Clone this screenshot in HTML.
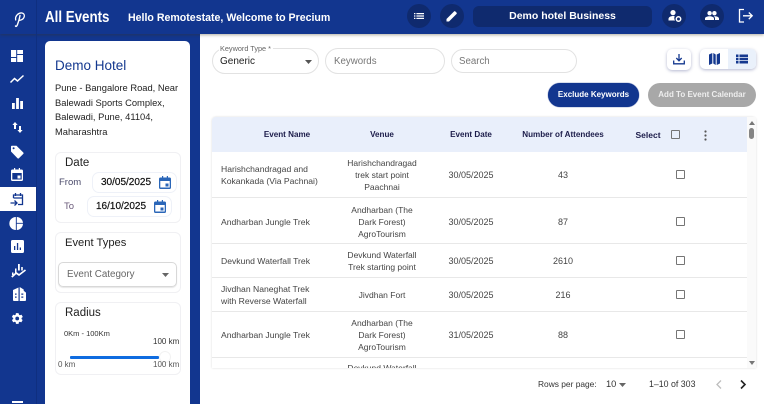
<!DOCTYPE html>
<html><head><meta charset="utf-8">
<style>
*{box-sizing:border-box}
html,body{margin:0;padding:0}
body{width:764px;height:404px;position:relative;overflow:hidden;background:#fff;font-family:"Liberation Sans",sans-serif;color:#222}
.a{position:absolute}
.t{position:absolute;white-space:nowrap;line-height:1}
.c{position:absolute;text-align:center;font-size:8.5px;line-height:12px;color:#444;transform:translateX(-50%);white-space:nowrap}
.d{font-size:9px}
.h{font-size:8.1px;font-weight:700;color:#1c1c4a}
.l{position:absolute;font-size:8.6px;line-height:12px;color:#444;white-space:nowrap}
.rl{position:absolute;left:212px;width:535px;height:1px;background:#e8e8e8}
.cb{position:absolute;width:9px;height:9px;border:1.3px solid #757575;border-radius:1px}
.hc{position:absolute;width:24px;height:24px;border-radius:50%;background:#0f2a6e}
svg{position:absolute;overflow:visible}
.pill{position:absolute;border:1px solid #e2e2e2;border-radius:13px;background:#fff}
.box{position:absolute;border:1px solid #f0f0f3;border-radius:6px;background:#fff}
.date{position:absolute;border:1px solid #eef1f8;border-radius:7px;background:#fff}
</style></head><body>
<!-- backgrounds -->
<div class="a" style="left:0;top:0;width:200px;height:404px;background:#12368f"></div>
<div class="a" style="left:0;top:0;width:764px;height:34px;background:#12368f;box-shadow:0 1px 3px rgba(60,50,20,.4)"></div>
<div class="a" style="left:36px;top:0;width:1px;height:404px;background:#0f2f80"></div>
<div class="a" style="left:45px;top:41px;width:145px;height:363px;background:#fff;border-radius:5px 5px 0 0"></div>
<div class="a" style="left:0;top:187px;width:36px;height:24px;background:#fff"></div>

<!-- logo -->
<svg style="left:12px;top:10px" width="16" height="18" viewBox="0 0 16 18"><path d="M3.700 10C2.800 5.500 7 2.500 10 3C13.500 3.600 13.300 9 8 10.300" fill="none" stroke="#fff" stroke-width="1.300" stroke-linecap="round"/><path d="M8 5.500C7.500 9 6.500 12 5.500 14.500C5 16 4 17 3.500 16" fill="none" stroke="#fff" stroke-width="1.400" stroke-linecap="round"/></svg>

<!-- header text -->
<div class="t" style="left:45px;top:10px;font-size:15.500px;font-weight:700;color:#fff;transform:scaleX(.86);transform-origin:0 0">All Events</div>
<div class="t" style="left:128px;top:13px;font-size:10.600px;font-weight:700;color:#fff">Hello Remotestate, Welcome to Precium</div>

<!-- header buttons -->
<div class="hc" style="left:407px;top:4px"></div>
<svg style="left:413px;top:10px" width="12" height="12" viewBox="0 0 12 12"><path d="M1 3h1.400v1.200H1zM1 5.400h1.400v1.200H1zM1 7.800h1.400V9H1zM3.400 3H11v1.200H3.400zM3.400 5.400H11v1.200H3.400zM3.400 7.800H11V9H3.400z" fill="#fff"/></svg>
<div class="hc" style="left:440px;top:4px"></div>
<svg style="left:446px;top:10px" width="12" height="12" viewBox="0 0 12 12"><path d="M.5 11.500V9L8 1.500a1 1 0 0 1 1.400 0l1.100 1.100a1 1 0 0 1 0 1.400L3 11.500z" fill="#fff"/></svg>
<div class="a" style="left:473px;top:6px;width:179px;height:21px;border-radius:6px;background:#0f2a6e"></div>
<div class="t" style="left:473px;width:179px;top:11px;text-align:center;font-size:10.500px;font-weight:700;color:#fff">Demo hotel Business</div>
<div class="hc" style="left:662px;top:4px"></div>
<svg style="left:668px;top:9px" width="14" height="14" viewBox="0 0 14 14"><circle cx="5" cy="3.600" r="2.600" fill="#fff"/><path d="M.5 11.500V10c0-2 2.500-3 4.500-3 .6 0 1.200.1 1.700.2C6 8.500 6.200 10.200 7 11.500z" fill="#fff"/><circle cx="10.500" cy="10" r="2.200" fill="none" stroke="#fff" stroke-width="1.500"/></svg>
<div class="hc" style="left:700px;top:4px"></div>
<svg style="left:705px;top:10px" width="14" height="12" viewBox="0 0 14 12"><circle cx="4.600" cy="3.200" r="2.200" fill="#fff"/><circle cx="9.400" cy="3.200" r="2.200" fill="#fff"/><path d="M0 10V8.500C0 7 2.500 6.200 4.600 6.200S9 7 9 8.500V10zM10 10V8.500c0-.9-.5-1.600-1.200-2.200 2-.2 5.200.5 5.200 2.200V10z" fill="#fff"/></svg>
<svg style="left:738px;top:8px" width="16" height="16" viewBox="0 0 16 16"><path d="M6 1.500H1.500v12.500H6" fill="none" stroke="#fff" stroke-width="1.300"/><path d="M5 7.800h9M10.800 4.500l3.400 3.300-3.400 3.300" fill="none" stroke="#fff" stroke-width="1.300"/></svg>

<!-- sidebar icons -->
<svg style="left:11px;top:50px" width="12" height="12" viewBox="0 0 12 12"><path d="M0 0h5.200v7H0zM6.200 0H12v4H6.200zM6.200 5H12v7H6.200zM0 8h5.200v4H0z" fill="#fff"/></svg>
<svg style="left:10px;top:74px" width="14" height="11" viewBox="0 0 14 11"><path d="M.5 8.500 4.500 4.500 7.500 7 13.500 1.500" fill="none" stroke="#fff" stroke-width="1.500"/></svg>
<svg style="left:12px;top:98px" width="11" height="11" viewBox="0 0 11 11"><path d="M0 5h2.800v6H0zM4.100 0h2.800v11H4.100zM8.200 3H11v8H8.200z" fill="#fff"/></svg>
<svg style="left:12px;top:122px" width="11" height="11" viewBox="0 0 11 11"><path d="M3 0 5.600 3H4v4H2V3H.4zM8 11 5.400 8H7V4h2v4h1.600z" fill="#fff"/></svg>
<svg style="left:10px;top:145px" width="14" height="14" viewBox="0 0 14 14"><path d="M1 1.500A.8.8 0 0 1 1.800.7H6.500L13.300 7.500a1 1 0 0 1 0 1.400L8.900 13.300a1 1 0 0 1-1.400 0L1 6.500z" fill="#fff"/><circle cx="3.600" cy="3.300" r="1" fill="#12368f"/></svg>
<svg style="left:11px;top:168px" width="12" height="13" viewBox="0 0 12 13"><path fill-rule="evenodd" d="M1.500 1.500h1.500V0h1.200v1.500h3.600V0H9v1.500h1.500A1.500 1.500 0 0 1 12 3v8.500a1.500 1.500 0 0 1-1.500 1.500h-9A1.500 1.500 0 0 1 0 11.500V3a1.500 1.500 0 0 1 1.500-1.500zM1.300 5v6.500h9.400V5zM6.500 7.500h3v3h-3z" fill="#fff"/></svg>
<svg style="left:10px;top:192px" width="15" height="15" viewBox="0 0 15 15"><path d="M3.500 6V3h9v9.500H8M3.500 6h9M5.500 1v3M10.500 1v3" fill="none" stroke="#12368f" stroke-width="1.300"/><path d="M.5 11h6M4.500 8.500 7 11l-2.500 2.500" fill="none" stroke="#12368f" stroke-width="1.300"/></svg>
<svg style="left:10px;top:217px" width="13" height="13" viewBox="0 0 14 14"><path d="M6.300 0v14a7 7 0 0 1 0-14zM7.300 0a7 7 0 0 1 6.700 6.300H7.300zM7.300 7.300H14A7 7 0 0 1 7.300 14z" fill="#fff"/></svg>
<svg style="left:11px;top:240px" width="13" height="13" viewBox="0 0 13 13"><path fill-rule="evenodd" d="M1.500 0h10A1.500 1.500 0 0 1 13 1.500v10a1.500 1.500 0 0 1-1.500 1.500h-10A1.500 1.500 0 0 1 0 11.500v-10A1.500 1.500 0 0 1 1.500 0zM3 6v4h1.300V6zM5.900 3v7h1.300V3zM8.700 7.500V10H10V7.500z" fill="#fff"/></svg>
<svg style="left:11px;top:264px" width="15" height="14" viewBox="0 0 15 14"><path d="M1 8.500h1.500V11H1zM4 4.500h1.500v4.500H4zM7 0h1.800v6.500H7zM10.200 3h1.600v3.500h-1.600z" fill="#fff"/><path d="M.8 13 5.200 9 8 11 14.500 6" fill="none" stroke="#fff" stroke-width="1.700"/></svg>
<svg style="left:13px;top:287px" width="13" height="14" viewBox="0 0 13 14"><path fill-rule="evenodd" d="M0 3 5.500.5V14H1.300A1.300 1.300 0 0 1 0 12.700zM2 6.500v1.200h1.600V6.500zM2 9.500v1.200h1.600V9.500z" fill="#fff"/><path fill-rule="evenodd" d="M6.700 0l4 2.500v1.300l1.500 1.200a1 1 0 0 1 .8 1V12.700A1.300 1.300 0 0 1 11.700 14h-5zM8.300 6.500v1.200h2V6.500zM8.300 9.500v1.200h2V9.500z" fill="#fff"/></svg>
<svg style="left:11px;top:312px" width="13" height="13" viewBox="0 0 24 24"><path d="M19.400 13c0-.3.100-.6.100-1s0-.7-.1-1l2.100-1.600c.2-.2.200-.4.100-.6l-2-3.500c-.1-.2-.4-.3-.6-.2l-2.500 1c-.5-.4-1.100-.7-1.700-1L14 2.400c0-.2-.2-.4-.5-.4h-4c-.2 0-.4.200-.5.400l-.4 2.700c-.6.200-1.100.6-1.700 1l-2.500-1c-.2-.1-.5 0-.6.200l-2 3.500c-.1.200 0 .4.100.6L4.100 11c0 .3-.1.700-.1 1s0 .7.100 1L2 14.600c-.2.200-.2.400-.1.600l2 3.500c.1.200.4.300.6.200l2.500-1c.5.400 1.100.7 1.700 1l.4 2.700c0 .2.200.4.500.4h4c.2 0 .5-.2.500-.4l.4-2.700c.6-.2 1.100-.6 1.700-1l2.500 1c.2.100.5 0 .6-.2l2-3.500c.1-.2 0-.4-.1-.6zM11.500 15.500a3.500 3.500 0 1 1 0-7 3.500 3.500 0 0 1 0 7z" fill="#fff"/></svg>
<div class="a" style="left:12px;top:401px;width:11px;height:2px;background:#fff"></div>

<!-- hotel card -->
<div class="t" style="left:55px;top:59px;font-size:13.500px;color:#14388f">Demo Hotel</div>
<div class="a" style="left:55px;top:81px;font-size:9.350px;line-height:14.500px;color:#222;white-space:nowrap">Pune - Bangalore Road, Near<br>Balewadi Sports Complex,<br>Balewadi, Pune, 41104,<br>Maharashtra</div>

<div class="box" style="left:55px;top:152px;width:126px;height:71px"></div>
<div class="t" style="left:65px;top:158px;font-size:11.500px;color:#222">Date</div>
<div class="t" style="left:59px;top:178px;font-size:9.500px;color:#4a4a6a">From</div>
<div class="date" style="left:92px;top:172px;width:85px;height:21px"></div>
<div class="t" style="left:101px;top:178px;font-size:10px;color:#111;-webkit-text-stroke:.2px #111">30/05/2025</div>
<svg style="left:159px;top:176px" width="12" height="13" viewBox="0 0 12 13"><path fill-rule="evenodd" d="M1.500 1.500h1.500V0h1.200v1.500h3.600V0H9v1.500h1.500A1.500 1.500 0 0 1 12 3v8.500a1.500 1.500 0 0 1-1.500 1.500h-9A1.500 1.500 0 0 1 0 11.500V3a1.500 1.500 0 0 1 1.500-1.500zM1.300 5v6.500h9.400V5zM6.500 7.500h3v3h-3z" fill="#2a66b8"/></svg>
<div class="t" style="left:64px;top:202px;font-size:9.500px;color:#6a5a7a">To</div>
<div class="date" style="left:87px;top:196px;width:85px;height:21px"></div>
<div class="t" style="left:96px;top:202px;font-size:10px;color:#111;-webkit-text-stroke:.2px #111">16/10/2025</div>
<svg style="left:154px;top:200px" width="12" height="13" viewBox="0 0 12 13"><path fill-rule="evenodd" d="M1.500 1.500h1.500V0h1.200v1.500h3.600V0H9v1.500h1.500A1.500 1.500 0 0 1 12 3v8.500a1.500 1.500 0 0 1-1.500 1.500h-9A1.500 1.500 0 0 1 0 11.500V3a1.500 1.500 0 0 1 1.500-1.500zM1.300 5v6.500h9.400V5zM6.500 7.500h3v3h-3z" fill="#2a66b8"/></svg>

<div class="box" style="left:55px;top:232px;width:126px;height:61px"></div>
<div class="t" style="left:65px;top:238px;font-size:11.200px;color:#222">Event Types</div>
<div class="a" style="left:58px;top:262px;width:119px;height:25px;border:1px solid #d8d8d8;border-radius:5px;box-shadow:0 1px 1px rgba(0,0,0,.1)"></div>
<div class="t" style="left:67px;top:270px;font-size:9.800px;color:#666">Event Category</div>
<svg style="left:162px;top:273px" width="8" height="4" viewBox="0 0 8 4"><path d="M0 0h7L3.500 4z" fill="#666"/></svg>

<div class="box" style="left:55px;top:302px;width:126px;height:73px"></div>
<div class="t" style="left:65px;top:308px;font-size:11.500px;color:#222">Radius</div>
<div class="t" style="left:64px;top:330px;font-size:7.500px;color:#333">0Km - 100Km</div>
<div class="t" style="left:153px;top:338px;font-size:8px;color:#333">100 km</div>
<div class="a" style="left:70px;top:356px;width:89px;height:3px;background:#0f6ce0;border-radius:1px"></div>
<div class="a" style="left:159px;top:351px;width:12px;height:12px;border-radius:50%;background:#fff;border:1px solid #f2f2f2"></div>
<div class="t" style="left:58px;top:361px;font-size:8px;color:#555">0 km</div>
<div class="t" style="left:153px;top:361px;font-size:8px;color:#555">100 km</div>

<!-- filters -->
<div class="pill" style="left:212px;top:48px;width:107px;height:26px"></div>
<div class="a" style="left:219px;top:44px;width:54px;height:8px;background:#fff"></div>
<div class="t" style="left:220px;top:45px;font-size:7.300px;color:#666">Keyword Type *</div>
<div class="t" style="left:220px;top:57px;font-size:10px;color:#222">Generic</div>
<svg style="left:305px;top:60px" width="7" height="4" viewBox="0 0 7 4"><path d="M0 0h7L3.500 4z" fill="#555"/></svg>
<div class="pill" style="left:325px;top:48px;width:120px;height:26px"></div>
<div class="t" style="left:334px;top:57px;font-size:9.700px;color:#777">Keywords</div>
<div class="pill" style="left:451px;top:49px;width:126px;height:24px"></div>
<div class="t" style="left:459px;top:57px;font-size:9.700px;color:#777">Search</div>

<!-- right tool buttons -->
<div class="a" style="left:667px;top:49px;width:24px;height:21px;border-radius:5px;background:#fff;box-shadow:0 1px 3px rgba(40,50,120,.35)"></div>
<svg style="left:673px;top:53px" width="12" height="12" viewBox="0 0 12 12"><path d="M.7 7.500v3.300h10.600V7.500M6 1v6.500M3.300 5 6 7.800 8.700 5" fill="none" stroke="#14388f" stroke-width="1.300"/></svg>
<div class="a" style="left:700px;top:49px;width:56px;height:20px;border-radius:5px;background:#fff;box-shadow:0 1px 3px rgba(40,50,120,.35);overflow:hidden"><div class="a" style="left:28px;top:0;width:28px;height:20px;background:#eaf1fb"></div></div>
<svg style="left:709px;top:53px" width="11" height="12" viewBox="0 0 11 12"><path d="M0 1.500 3.300 0v10.500L0 12zM4.300 0 6.700 1.500V12L4.300 10.500zM7.700 1.500 11 0v10.500L7.700 12z" fill="#14388f"/></svg>
<svg style="left:736px;top:54px" width="12" height="10" viewBox="0 0 12 10"><path d="M0 .5h2.500v2.500H0zM3.500 .5H12v2.500H3.500zM0 3.800h2.500v2.500H0zM3.500 3.800H12v2.500H3.500zM0 7h2.500v2.500H0zM3.500 7H12v2.500H3.500z" fill="#14388f"/></svg>

<div class="a" style="left:548px;top:83px;width:91px;height:24px;border-radius:12px;background:#12368f;box-shadow:0 0 1px #0a2a8a"></div>
<div class="t" style="left:548px;width:91px;top:91px;text-align:center;font-size:8px;font-weight:700;color:#fff">Exclude Keywords</div>
<div class="a" style="left:648px;top:83px;width:108px;height:24px;border-radius:12px;background:#a8a8a8"></div>
<div class="t" style="left:648px;width:108px;top:91px;text-align:center;font-size:8px;font-weight:700;color:#eee">Add To Event Calendar</div>

<!-- table -->
<div class="a" style="left:212px;top:117px;width:544px;height:251px;background:#fff;box-shadow:0 0 2px rgba(0,0,0,.15);border-radius:4px 4px 0 0"></div>
<div class="a" style="left:212px;top:117px;width:535px;height:35px;background:#e9effb;border-radius:4px 0 0 0"></div>
<div class="c h" style="left:287px;top:129px">Event Name</div>
<div class="c h" style="left:382px;top:129px">Venue</div>
<div class="c h" style="left:471px;top:129px">Event Date</div>
<div class="c h" style="left:563px;top:129px">Number of Attendees</div>
<div class="c h" style="left:648px;top:129px;font-size:8.500px">Select</div>
<div class="cb" style="left:671px;top:130px"></div>
<svg style="left:704px;top:130px" width="3" height="11" viewBox="0 0 3 11"><circle cx="1.500" cy="1.500" r="1.100" fill="#555"/><circle cx="1.500" cy="5.500" r="1.100" fill="#555"/><circle cx="1.500" cy="9.500" r="1.100" fill="#555"/></svg>

<!-- rows -->
<div class="l" style="left:221px;top:163px">Harishchandragad and<br>Kokankada (Via Pachnai)</div>
<div class="c" style="left:382px;top:157px">Harishchandragad<br>trek start point<br>Paachnai</div>
<div class="c d" style="left:471px;top:169px">30/05/2025</div>
<div class="c d" style="left:563px;top:169px">43</div>
<div class="cb" style="left:676px;top:170px"></div>
<div class="rl" style="top:197px"></div>

<div class="l" style="left:221px;top:216px">Andharban Jungle Trek</div>
<div class="c" style="left:382px;top:204px">Andharban (The<br>Dark Forest)<br>AgroTourism</div>
<div class="c d" style="left:471px;top:216px">30/05/2025</div>
<div class="c d" style="left:563px;top:216px">87</div>
<div class="cb" style="left:676px;top:217px"></div>
<div class="rl" style="top:243px"></div>

<div class="l" style="left:221px;top:255px">Devkund Waterfall Trek</div>
<div class="c" style="left:382px;top:249px">Devkund Waterfall<br>Trek starting point</div>
<div class="c d" style="left:471px;top:255px">30/05/2025</div>
<div class="c d" style="left:563px;top:255px">2610</div>
<div class="cb" style="left:676px;top:256px"></div>
<div class="rl" style="top:277px"></div>

<div class="l" style="left:221px;top:283px">Jivdhan Naneghat Trek<br>with Reverse Waterfall</div>
<div class="c" style="left:382px;top:289px">Jivdhan Fort</div>
<div class="c d" style="left:471px;top:289px">30/05/2025</div>
<div class="c d" style="left:563px;top:289px">216</div>
<div class="cb" style="left:676px;top:290px"></div>
<div class="rl" style="top:311px"></div>

<div class="l" style="left:221px;top:329px">Andharban Jungle Trek</div>
<div class="c" style="left:382px;top:317px">Andharban (The<br>Dark Forest)<br>AgroTourism</div>
<div class="c d" style="left:471px;top:329px">31/05/2025</div>
<div class="c d" style="left:563px;top:329px">88</div>
<div class="cb" style="left:676px;top:330px"></div>
<div class="rl" style="top:357px"></div>
<div class="c" style="left:382px;top:362px;height:6px;overflow:hidden">Devkund Waterfall</div>

<!-- scrollbar -->
<div class="a" style="left:747px;top:117px;width:9px;height:251px;background:#fafafa"></div>
<svg style="left:749px;top:121px" width="6" height="4" viewBox="0 0 6 4"><path d="M3 0l3 4H0z" fill="#777"/></svg>
<div class="a" style="left:749px;top:128px;width:5px;height:11px;border-radius:2.500px;background:#858585"></div>
<svg style="left:749px;top:361px" width="6" height="4" viewBox="0 0 6 4"><path d="M3 4 6 0H0z" fill="#777"/></svg>

<!-- pagination -->
<div class="t" style="left:538px;top:380px;font-size:8.400px;color:#333">Rows per page:</div>
<div class="t" style="left:606px;top:380px;font-size:9.300px;color:#333">10</div>
<svg style="left:619px;top:383px" width="7" height="4" viewBox="0 0 7 4"><path d="M0 0h7L3.500 4z" fill="#666"/></svg>
<div class="t" style="left:649px;top:380px;font-size:8.800px;color:#333">1–10 of 303</div>
<svg style="left:716px;top:380px" width="6" height="9" viewBox="0 0 6 9"><path d="M5 .5 1 4.500 5 8.500" fill="none" stroke="#bdbdbd" stroke-width="1.300"/></svg>
<svg style="left:740px;top:380px" width="6" height="9" viewBox="0 0 6 9"><path d="M1 .5 5 4.500 1 8.500" fill="none" stroke="#222" stroke-width="1.600"/></svg>
</body></html>
